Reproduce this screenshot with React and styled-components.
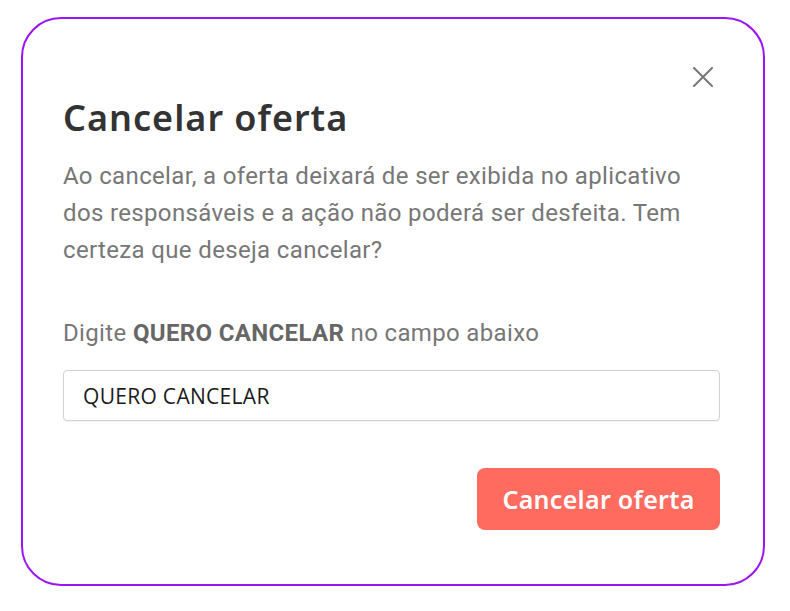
import React, { useState } from "react";
import styled, { createGlobalStyle } from "styled-components";

const GlobalStyle = createGlobalStyle`
  body {
    margin: 0;
    background: #ffffff;
  }
`;

const Page = styled.div`
  padding: 17px 0 0 21px;
`;

const Modal = styled.div`
  width: 744px;
  height: 569px;
  box-sizing: border-box;
  border: 2px solid #9b14f5;
  border-radius: 40px;
  background: #fff;
  padding: 48px 43px 0 40px;
  display: flex;
  flex-direction: column;
`;

const CloseRow = styled.div`
  display: flex;
  justify-content: flex-end;
  height: 20px;
`;

const CloseButton = styled.button`
  border: 0;
  background: transparent;
  padding: 0;
  margin-right: 7px;
  width: 20px;
  height: 20px;
  display: flex;
  cursor: pointer;
`;

const Title = styled.h2`
  margin: 9px 0 0;
  font-family: "Noto Sans", sans-serif;
  font-weight: 600;
  font-size: 36px;
  letter-spacing: 1px;
  line-height: 44px;
  color: #333333;
`;

const Text = styled.p`
  margin: ${(p) => p.$mt || 0}px 0 0;
  font-family: "Roboto", sans-serif;
  font-size: 24px;
  letter-spacing: 0.35px;
  line-height: 37px;
  color: #777777;
  b {
    color: #666666;
    font-weight: 700;
  }
`;

const Field = styled.input`
  margin-top: 18px;
  height: 51px;
  box-sizing: border-box;
  border: 1px solid #d2d2d2;
  border-radius: 4px;
  padding: 0 19px;
  font-family: "Open Sans", sans-serif;
  font-size: 21px;
  letter-spacing: 0.3px;
  color: #1a1a1a;
  outline: none;
  box-shadow: 0 1px 1px rgba(0, 0, 0, 0.05);
`;

const Actions = styled.div`
  display: flex;
  justify-content: flex-end;
  margin-top: 47px;
`;

const DangerButton = styled.button`
  width: 243px;
  height: 62px;
  border: 0;
  border-radius: 8px;
  background: #ff6b5f;
  color: #fff;
  font-family: "Noto Sans", sans-serif;
  font-weight: 600;
  font-size: 25px;
  letter-spacing: 0.3px;
  cursor: pointer;
`;

export default function App() {
  const [value, setValue] = useState("QUERO CANCELAR");

  return (
    <Page>
      <GlobalStyle />
      <Modal>
        <CloseRow>
          <CloseButton aria-label="Fechar">
            <svg width="20" height="20" viewBox="0 0 20 20">
              <path
                d="M1 1 L19 19 M19 1 L1 19"
                stroke="#777"
                strokeWidth="2"
                strokeLinecap="round"
              />
            </svg>
          </CloseButton>
        </CloseRow>
        <Title>Cancelar oferta</Title>
        <Text $mt={18}>
          Ao cancelar, a oferta deixará de ser exibida no aplicativo dos
          responsáveis e a ação não poderá ser desfeita. Tem certeza que deseja
          cancelar?
        </Text>
        <Text $mt={46}>
          Digite <b>QUERO CANCELAR</b> no campo abaixo
        </Text>
        <Field value={value} onChange={(e) => setValue(e.target.value)} />
        <Actions>
          <DangerButton>Cancelar oferta</DangerButton>
        </Actions>
      </Modal>
    </Page>
  );
}
